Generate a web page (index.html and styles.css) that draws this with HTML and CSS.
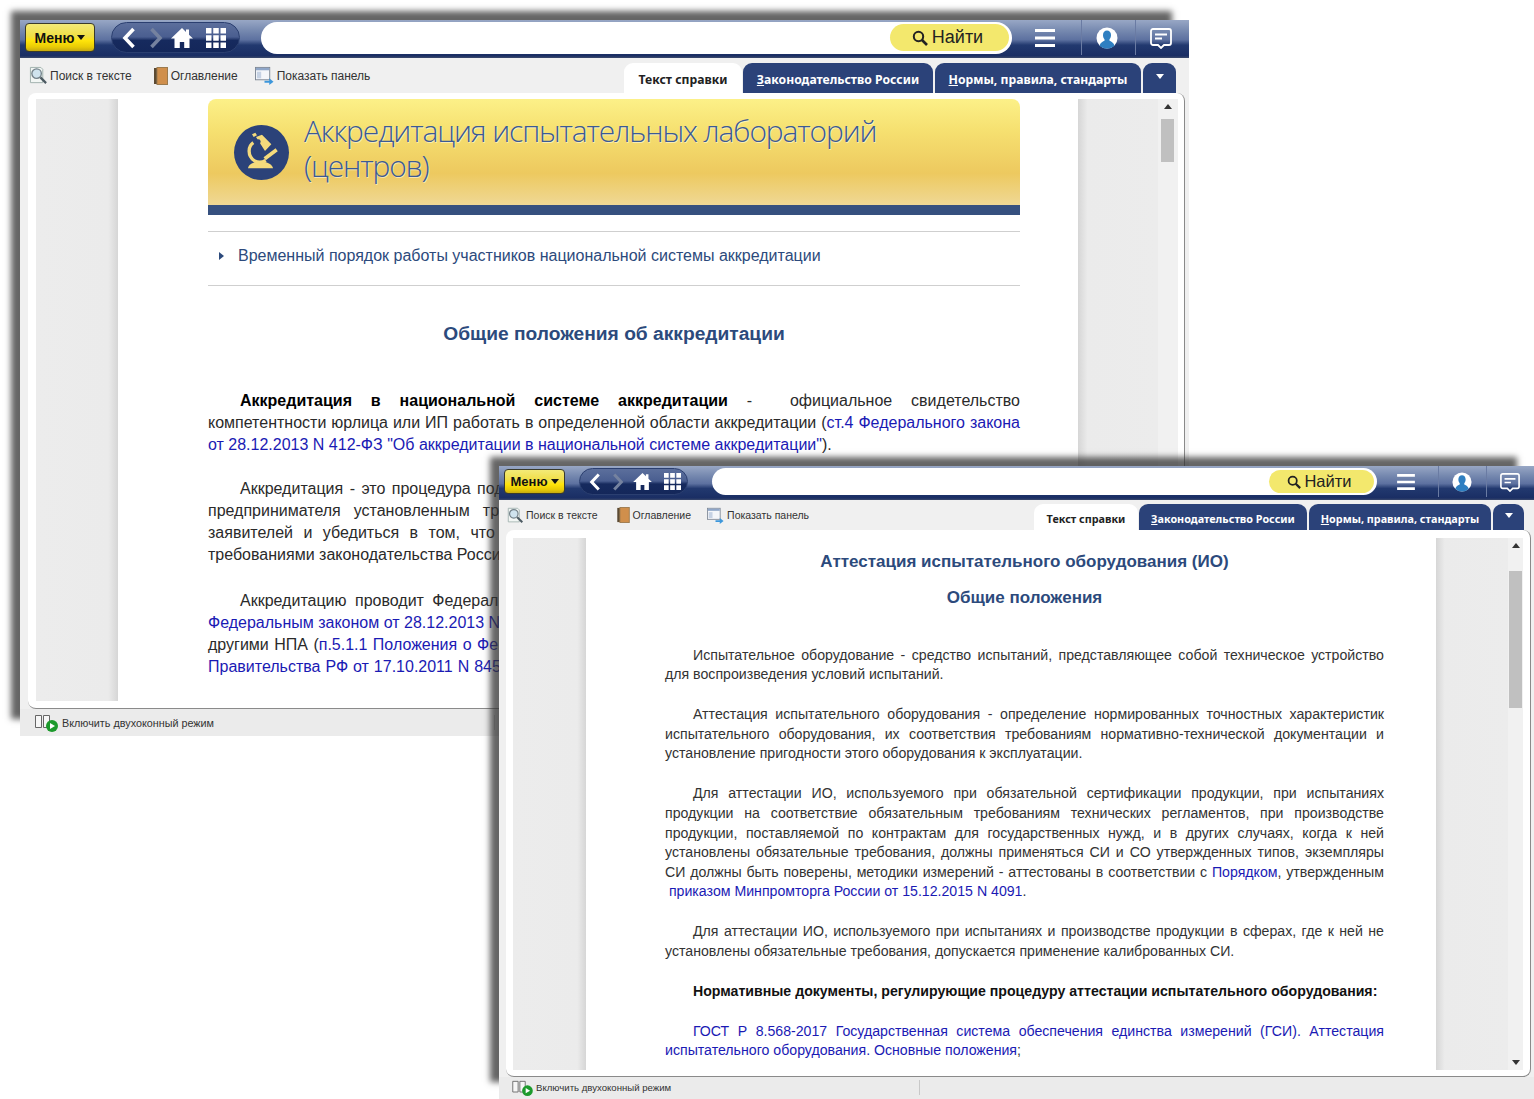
FILE: index.html
```html
<!DOCTYPE html>
<html lang="ru">
<head>
    <meta charset="UTF-8">
    <meta name="viewport" content="width=device-width, initial-scale=1.0">
    <title>Аккредитация испытательных лабораторий</title>
    <link rel="stylesheet" href="styles.css">
</head>
<body>

<!-- shared icons -->
<svg class="sprite" aria-hidden="true">
    <symbol id="i-back" viewBox="0 0 16 24"><path d="M12.500 3 4 12l8.500 9" fill="none" stroke="currentColor" stroke-width="3.600"/></symbol>
    <symbol id="i-forward" viewBox="0 0 16 24"><path d="M3.500 3 12 12l-8.500 9" fill="none" stroke="currentColor" stroke-width="3.600"/></symbol>
    <symbol id="i-home" viewBox="0 0 22 20"><path d="M11 0 0 10.500h3.500V20h5.300v-6h4.400v6h5.300v-9.500H22L18 6.700V1.500h-3v2.400z" fill="currentColor"/></symbol>
    <symbol id="i-grid" viewBox="0 0 20 20"><path d="M0 0h5.500v5.500H0zM7.250 0h5.500v5.500h-5.500zM14.500 0H20v5.500h-5.500zM0 7.250h5.500v5.500H0zM7.250 7.250h5.500v5.500h-5.500zM14.500 7.250H20v5.500h-5.500zM0 14.500h5.500V20H0zM7.250 14.500h5.500V20h-5.500zM14.500 14.500H20V20h-5.500z" fill="currentColor"/></symbol>
    <symbol id="i-glass" viewBox="0 0 16 16"><circle cx="6.500" cy="6.500" r="4.700" fill="none" stroke="currentColor" stroke-width="2"/><path d="m10 10 5 5" stroke="currentColor" stroke-width="2.600"/></symbol>
    <symbol id="i-burger" viewBox="0 0 20 18"><path d="M0 0h20v3H0zM0 7.500h20v3H0zM0 15h20v3H0z" fill="currentColor"/></symbol>
    <symbol id="i-user" viewBox="0 0 22 22"><circle cx="11" cy="11" r="10.500" fill="#fff"/><path d="M3.500 18.400c1-3 3.700-4 5-4.600v-1.500C7.300 11 7 9.500 7 8c0-2.800 1.800-4.500 4-4.500S15 5.200 15 8c0 1.500-.3 3-1.500 4.300v1.500c1.300.6 4 1.600 5 4.600a10.500 10.500 0 0 1-15 0z" fill="#2f7fc1"/></symbol>
    <symbol id="i-chat" viewBox="0 0 22 22"><path d="M3 2h16a2 2 0 0 1 2 2v12a2 2 0 0 1-2 2h-5l-3 3-3-3H3a2 2 0 0 1-2-2V4a2 2 0 0 1 2-2z" fill="none" stroke="currentColor" stroke-width="1.800"/><path d="M5 7.500h12M5 11.500h7" stroke="currentColor" stroke-width="1.800"/></symbol>
    <symbol id="i-search-doc" viewBox="0 0 20 20"><path d="M1.500 1.500h11l2 2v14h-13z" fill="#f2f6f4" stroke="#9fb0ad"/><circle cx="8" cy="8" r="5" fill="#cfe3ee" stroke="#74828a" stroke-width="1.400"/><path d="m12 12 6 6" stroke="#4c5a62" stroke-width="2.400"/></symbol>
    <symbol id="i-book" viewBox="0 0 14 18"><rect x="0" y="1" width="3" height="16" fill="#5b4a33"/><rect x="3" y="0.500" width="10.500" height="17" fill="#d08f4c" stroke="#9b7a4e"/></symbol>
    <symbol id="i-panel" viewBox="0 0 20 20"><rect x="0.500" y="1.500" width="15" height="13" fill="#f4f6fa" stroke="#7d8794"/><rect x="1" y="2" width="14" height="2.500" fill="#8fa6c8"/><rect x="2" y="6" width="4.500" height="7" fill="#c6d2e4"/><path d="M10 15.500h5v-2.500l4.500 3.500-4.500 3.500v-2.500h-5z" fill="#3d97db"/></symbol>
    <symbol id="i-dual" viewBox="0 0 24 18"><path d="M.5 1.500h6v12h-6zM8.500 1.500h6v12h-6z" fill="#f6f6f6" stroke="#666"/><circle cx="17" cy="12" r="6" fill="#1c9a2c"/><path d="m15 9 5 3-5 3z" fill="#fff"/></symbol>
    <symbol id="i-scope" viewBox="18 18 165 165">
        <path d="M60 148c2-12 14-18 30-20h15c17 2 28 9 30 20z" fill="#f4da7c"/>
        <path d="M76 71C60 82 57 110 80 126c10 5 24 4 33-2" fill="none" stroke="#f4da7c" stroke-width="10"/>
        <path d="m72 46 10-5 5 8-10 5zM84 54l18-7 28 29-19 20z" fill="#f4da7c"/>
        <circle cx="91" cy="68" r="7" fill="#2b4279"/>
        <path d="m110 119 36-27" stroke="#f4da7c" stroke-width="11"/>
    </symbol>
</svg>

<div class="win win-a">
    <div class="topbar">
        <button class="menu-btn">Меню<span class="caret"></span></button>
        <div class="nav-pill">
            <svg class="ic-back"><use href="#i-back"/></svg>
            <svg class="ic-forward"><use href="#i-forward"/></svg>
            <svg class="ic-home"><use href="#i-home"/></svg>
            <svg class="ic-grid"><use href="#i-grid"/></svg>
        </div>
        <div class="search">
            <div class="find"><svg class="ic-glass"><use href="#i-glass"/></svg>Найти</div>
        </div>
        <div class="top-cell cell-burger"><svg class="ic-burger"><use href="#i-burger"/></svg></div>
        <div class="top-cell cell-user"><svg class="ic-user"><use href="#i-user"/></svg></div>
        <div class="top-cell cell-chat"><svg class="ic-chat"><use href="#i-chat"/></svg></div>
    </div>

    <div class="toolbar">
        <div class="tools">
            <span class="tool tool-search"><svg class="ic-tool"><use href="#i-search-doc"/></svg>Поиск в тексте</span>
            <span class="tool tool-toc"><svg class="ic-tool-book"><use href="#i-book"/></svg>Оглавление</span>
            <span class="tool tool-panel"><svg class="ic-tool"><use href="#i-panel"/></svg>Показать панель</span>
        </div>
        <div class="tabs">
            <span class="tab tab-active">Текст справки</span>
            <span class="tab tab-law"><u>З</u>аконодательство России</span>
            <span class="tab tab-norm"><u>Н</u>ормы, правила, стандарты</span>
            <span class="tab tab-more"><span class="caret caret-white"></span></span>
        </div>
    </div>

    <div class="panel">
        <div class="side side-left"></div>
        <div class="doc">
            <div class="banner">
                <div class="banner-main">
                    <svg class="ic-scope"><use href="#i-scope"/></svg>
                    <div class="banner-title">Аккредитация испытательных лабораторий<br>(центров)</div>
                </div>
            </div>
            <div class="notice"><span class="notice-arrow"></span>Временный порядок работы участников национальной системы аккредитации</div>
            <h2 class="doc-heading">Общие положения об аккредитации</h2>
            <p class="para"><b>Аккредитация в национальной системе аккредитации</b> - &nbsp;официальное свидетельство компетентности юрлица или ИП работать в определенной области аккредитации (<a href="#">ст.4 Федерального закона от 28.12.2013 N 412-ФЗ "Об аккредитации в национальной системе аккредитации"</a>).</p>
            <!-- the right part of these two paragraphs sits under the second window -->
            <p class="para para-lines">
                <span class="line first ws-2">Аккредитация - это процедура под</span>
                <span class="line ws-8">предпринимателя установленным тр</span>
                <span class="line ws-6">заявителей и убедиться в том, что</span>
                <span class="line">требованиями законодательства Росси</span>
            </p>
            <p class="para para-lines">
                <span class="line first ws-4">Аккредитацию проводит Федерал</span>
                <span class="line"><a href="#">Федеральным законом от 28.12.2013 N</a></span>
                <span class="line ws-1">другими НПА (<a href="#">п.5.1.1 Положения о Фе</a></span>
                <span class="line ws-half"><a href="#">Правительства РФ от 17.10.2011 N 845</a></span>
            </p>
        </div>
        <div class="side side-right"></div>
        <div class="scroll">
            <span class="scroll-up"></span>
            <span class="scroll-thumb"></span>
        </div>
    </div>

    <div class="status">
        <span class="status-item"><svg class="ic-dual"><use href="#i-dual"/></svg>Включить двухоконный режим</span>
        <span class="status-sep"></span>
    </div>
</div>

<div class="win win-b">
    <div class="topbar">
        <button class="menu-btn">Меню<span class="caret"></span></button>
        <div class="nav-pill">
            <svg class="ic-back"><use href="#i-back"/></svg>
            <svg class="ic-forward"><use href="#i-forward"/></svg>
            <svg class="ic-home"><use href="#i-home"/></svg>
            <svg class="ic-grid"><use href="#i-grid"/></svg>
        </div>
        <div class="search">
            <div class="find"><svg class="ic-glass"><use href="#i-glass"/></svg>Найти</div>
        </div>
        <div class="top-cell cell-burger"><svg class="ic-burger"><use href="#i-burger"/></svg></div>
        <div class="top-cell cell-user"><svg class="ic-user"><use href="#i-user"/></svg></div>
        <div class="top-cell cell-chat"><svg class="ic-chat"><use href="#i-chat"/></svg></div>
    </div>

    <div class="toolbar">
        <div class="tools">
            <span class="tool tool-search"><svg class="ic-tool"><use href="#i-search-doc"/></svg>Поиск в тексте</span>
            <span class="tool tool-toc"><svg class="ic-tool-book"><use href="#i-book"/></svg>Оглавление</span>
            <span class="tool tool-panel"><svg class="ic-tool"><use href="#i-panel"/></svg>Показать панель</span>
        </div>
        <div class="tabs">
            <span class="tab tab-active">Текст справки</span>
            <span class="tab tab-law"><u>З</u>аконодательство России</span>
            <span class="tab tab-norm"><u>Н</u>ормы, правила, стандарты</span>
            <span class="tab tab-more"><span class="caret caret-white"></span></span>
        </div>
    </div>

    <div class="panel">
        <div class="side side-left"></div>
        <div class="doc">
            <h2 class="doc-title">Аттестация испытательного оборудования (ИО)</h2>
            <h2 class="doc-sub">Общие положения</h2>
            <p class="para">Испытательное оборудование - средство испытаний, представляющее собой техническое устройство для воспроизведения условий испытаний.</p>
            <p class="para">Аттестация испытательного оборудования - определение нормированных точностных характеристик испытательного оборудования, их соответствия требованиям нормативно-технической документации и установление пригодности этого оборудования к эксплуатации.</p>
            <p class="para">Для аттестации ИО, используемого при обязательной сертификации продукции, при испытаниях продукции на соответствие обязательным требованиям технических регламентов, при производстве продукции, поставляемой по контрактам для государственных нужд, и в других случаях, когда к ней установлены обязательные требования, должны применяться СИ и СО утвержденных типов, экземпляры СИ должны быть поверены, методики измерений - аттестованы в соответствии с <a href="#">Порядком</a>, утвержденным &nbsp;<a href="#">приказом Минпромторга России от 15.12.2015 N 4091</a>.</p>
            <p class="para">Для аттестации ИО, используемого при испытаниях и производстве продукции в сферах, где к ней не установлены обязательные требования, допускается применение калиброванных СИ.</p>
            <p class="para"><b>Нормативные документы, регулирующие процедуру аттестации испытательного оборудования:</b></p>
            <p class="para"><a href="#">ГОСТ Р 8.568-2017 Государственная система обеспечения единства измерений (ГСИ). Аттестация испытательного оборудования. Основные положения</a>;</p>
        </div>
        <div class="side side-right"></div>
        <div class="scroll">
            <span class="scroll-up"></span>
            <span class="scroll-thumb"></span>
            <span class="scroll-down"></span>
        </div>
    </div>

    <div class="status">
        <span class="status-item"><svg class="ic-dual"><use href="#i-dual"/></svg>Включить двухоконный режим</span>
        <span class="status-sep"></span>
    </div>
</div>

</body>
</html>
```

FILE: styles.css
```css
html, body {
    margin: 0;
    height: 100%;
}
body {
    position: relative;
    width: 1534px;
    height: 1099px;
    overflow: hidden;
    background: #fff;
    font-family: "Liberation Sans", Arial, sans-serif;
    color: #2a2a2a;
}
.sprite {
    display: none;
}
svg {
    display: block;
    flex: none;
}

/* windows on the desktop */
.win {
    position: absolute;
    display: flex;
    flex-direction: column;
    background: #f0f0f0;
    box-shadow: -13px -13px 6px -4px rgba(50, 50, 50, 0.75);
}
.win-a {
    left: 20px;
    top: 20px;
    width: 1169px;
    height: 716px;
}
.win-b {
    left: 499px;
    top: 466px;
    width: 1035px;
    height: 633px;
}

/* top blue bar */
.topbar {
    display: flex;
    align-items: center;
    flex: none;
    box-sizing: border-box;
    background: linear-gradient(#98a7c5 0%, #7487ae 30%, #5d71a0 52%, #22396f 66%, #1a2e64 94%, #3c4a6c 100%);
}
.win-a .topbar {
    height: 38px;
    padding: 0 0 3px 5px;
}
.win-b .topbar {
    height: 34px;
    padding: 0 0 3px 5px;
}
.menu-btn {
    display: flex;
    align-items: center;
    justify-content: center;
    gap: 3px;
    box-sizing: border-box;
    padding: 0;
    border: 1px solid #3a3a2a;
    border-radius: 4px;
    background: linear-gradient(#f3ea78 0%, #f0de45 45%, #ffe40a 62%, #e9cb05 85%, #c6aa10 100%);
    color: #111;
    font-family: "Liberation Sans", Arial, sans-serif;
    font-weight: bold;
}
.win-a .menu-btn {
    width: 70px;
    height: 29px;
    font-size: 14px;
}
.win-b .menu-btn {
    width: 61px;
    height: 25px;
    font-size: 13px;
}
.caret {
    width: 0;
    height: 0;
    border-left: 4.500px solid transparent;
    border-right: 4.500px solid transparent;
    border-top: 5px solid #111;
}
.caret-white {
    border-top-color: #fff;
}
.nav-pill {
    display: flex;
    align-items: center;
    box-sizing: border-box;
    border: 1px solid #2b3f70;
    border-radius: 17px;
    background: linear-gradient(#5c6f9c 0%, #4a5e90 48%, #162a5e 60%, #14275a 100%);
    color: #fff;
}
.win-a .nav-pill {
    width: 129px;
    height: 31px;
    margin-left: 16px;
    padding-left: 9px;
}
.win-b .nav-pill {
    width: 109px;
    height: 27px;
    margin-left: 14px;
    padding-left: 8px;
}
.ic-forward {
    color: #75829f;
}
.win-a .ic-back, .win-a .ic-forward {
    width: 16px;
    height: 24px;
}
.win-a .ic-forward {
    margin-left: 11px;
}
.win-a .ic-home {
    width: 22px;
    height: 20px;
    margin-left: 7px;
}
.win-a .ic-grid {
    width: 20px;
    height: 20px;
    margin-left: 13px;
}
.win-b .ic-back, .win-b .ic-forward {
    width: 14px;
    height: 20px;
}
.win-b .ic-forward {
    margin-left: 9px;
}
.win-b .ic-home {
    width: 19px;
    height: 17px;
    margin-left: 8px;
}
.win-b .ic-grid {
    width: 17px;
    height: 17px;
    margin-left: 12px;
}
.search {
    display: flex;
    justify-content: flex-end;
    align-items: center;
    box-sizing: border-box;
    background: #fff;
}
.win-a .search {
    width: 751px;
    height: 32px;
    margin-left: 21px;
    padding-right: 3px;
    border-radius: 16px;
}
.win-b .search {
    width: 665px;
    height: 27px;
    margin-left: 24px;
    padding-right: 3px;
    border-radius: 14px;
}
.find {
    display: flex;
    align-items: center;
    justify-content: center;
    box-sizing: border-box;
    padding-right: 4px;
    background: #f3e86d;
    color: #222;
}
.win-a .find {
    width: 119px;
    height: 27px;
    gap: 4px;
    border-radius: 14px;
    font-size: 18px;
}
.win-b .find {
    width: 105px;
    height: 23px;
    gap: 3px;
    border-radius: 12px;
    font-size: 16.500px;
}
.win-a .ic-glass {
    width: 16px;
    height: 16px;
}
.win-b .ic-glass {
    width: 14px;
    height: 14px;
}
.top-cell {
    display: flex;
    align-items: center;
    justify-content: center;
    align-self: stretch;
    color: #fff;
    box-sizing: border-box;
}
.cell-user, .cell-chat {
    border-left: 1px solid #6a7ba3;
}
.win-a .cell-burger {
    width: 69px;
    padding-right: 4px;
}
.win-a .cell-user, .win-a .cell-chat {
    width: 54px;
    padding-right: 3px;
}
.win-b .cell-burger {
    width: 61px;
    padding-right: 4px;
}
.win-b .cell-user, .win-b .cell-chat {
    width: 48px;
    padding-right: 2px;
}
.win-a .ic-burger {
    width: 20px;
    height: 18px;
}
.win-a .ic-user, .win-a .ic-chat {
    width: 22px;
    height: 22px;
}
.win-b .ic-burger {
    width: 18px;
    height: 16px;
}
.win-b .ic-user, .win-b .ic-chat {
    width: 20px;
    height: 20px;
}

/* tools and tabs row */
.toolbar {
    display: flex;
    justify-content: space-between;
    align-items: flex-end;
    flex: none;
    color: #333;
}
.win-a .toolbar {
    height: 35px;
    padding-right: 13px;
}
.win-b .toolbar {
    height: 30px;
    padding-right: 10px;
}
.tools {
    display: flex;
    align-items: center;
    align-self: stretch;
}
.tool {
    display: flex;
    align-items: center;
}
.win-a .tools {
    padding: 0 0 0 9px;
    font-size: 12px;
}
.win-b .tools {
    padding: 0 0 0 8px;
    font-size: 10.500px;
}
.win-a .tool {
    gap: 2px;
    margin-right: 22px;
}
.win-a .tool-toc {
    margin-right: 17px;
    gap: 3px;
}
.win-a .tool-panel {
    gap: 3px;
}
.win-b .tool {
    gap: 2px;
    margin-right: 19px;
}
.win-b .tool-toc {
    margin-right: 16px;
    gap: 3px;
}
.win-b .tool-panel {
    gap: 3px;
}
.ic-tool {
    width: 19px;
    height: 19px;
}
.ic-tool-book {
    width: 14px;
    height: 18px;
}
.win-b .ic-tool {
    width: 17px;
    height: 17px;
}
.win-b .ic-tool-book {
    width: 13px;
    height: 16px;
}
.tabs {
    display: flex;
    gap: 1px;
    font-family: "Noto Sans", sans-serif;
    font-weight: bold;
}
.tab {
    display: flex;
    align-items: center;
    justify-content: center;
    box-sizing: border-box;
    border-radius: 9px 9px 0 0;
    background: #2b4279;
    color: #fff;
}
.tab-active {
    background: #fff;
    color: #222;
}
.win-a .tab {
    height: 30px;
    padding-top: 2px;
    font-size: 12.200px;
}
.win-a .tab-active {
    width: 118px;
}
.win-a .tab-law {
    width: 190px;
}
.win-a .tab-norm {
    width: 206px;
    margin-left: 1px;
}
.win-a .tab-more {
    width: 33px;
    margin-left: 1px;
    padding-bottom: 6px;
}
.win-b .tab {
    height: 26px;
    padding-top: 2px;
    font-size: 10.800px;
}
.win-b .tab-active {
    width: 104px;
}
.win-b .tab-law {
    width: 168px;
}
.win-b .tab-norm {
    width: 182px;
    margin-left: 1px;
}
.win-b .tab-more {
    width: 31px;
    margin-left: 1px;
    padding-bottom: 6px;
}

/* white content panel */
.panel {
    display: grid;
    flex: 1;
    min-height: 0;
    box-sizing: border-box;
    background: #fff;
    border-right: 1px solid #8a8a8a;
    border-bottom: 1px solid #8a8a8a;
    border-radius: 8px;
}
.win-a .panel {
    grid-template-columns: 82px 960px 80px 20px;
    margin: 0 4px 0 8px;
    padding: 6px 0 7px 8px;
}
.win-b .panel {
    grid-template-columns: 73px 850px 72px 15px;
    margin: 0 3px 0 7px;
    padding: 8px 0 6px 7px;
}
.side-left {
    background: linear-gradient(to right, #ececec 0, #ebebeb 88%, #d6d6d6 100%);
}
.side-right {
    background: linear-gradient(to left, #ececec 0, #ebebeb 88%, #d6d6d6 100%);
}
.scroll {
    position: relative;
    background: #f1f1f1;
}
.scroll-up, .scroll-down {
    position: absolute;
    left: 50%;
    width: 0;
    height: 0;
    margin-left: -4px;
    border-left: 4px solid transparent;
    border-right: 4px solid transparent;
}
.scroll-up {
    top: 5px;
    border-bottom: 5px solid #333;
}
.scroll-down {
    bottom: 5px;
    border-top: 5px solid #333;
}
.scroll-thumb {
    position: absolute;
    background: #c0c0c0;
}
.win-a .scroll-thumb {
    left: 3px;
    right: 4px;
    top: 20px;
    height: 43px;
}
.win-b .scroll-thumb {
    left: 1px;
    right: 1px;
    top: 33px;
    height: 137px;
}

/* document body */
.doc {
    overflow: hidden;
    box-sizing: border-box;
}
.win-a .doc {
    padding: 0 58px 0 90px;
}
.win-b .doc {
    padding: 14px 52px 0 79px;
}
.doc a {
    color: #1a1ab4;
    text-decoration: none;
}
.para {
    margin: 0;
    text-align: justify;
}
.win-a .para {
    margin-bottom: 22px;
    font-size: 16px;
    line-height: 22px;
    text-indent: 32px;
}
.win-a .para-lines + .para-lines {
    margin-top: 24px;
}
.win-a .para b {
    color: #000;
}
.win-b .para {
    margin-bottom: 20.400px;
    font-size: 14.150px;
    line-height: 19.600px;
    text-indent: 28px;
    color: #333;
}
.win-b .para b {
    color: #111;
}
.line {
    display: block;
    white-space: nowrap;
    text-indent: 0;
}
.line.first {
    text-indent: 32px;
}
.ws-half {
    word-spacing: 0.500px;
}
.ws-1 {
    word-spacing: 1px;
}
.ws-2 {
    word-spacing: 2px;
}
.ws-4 {
    word-spacing: 4px;
}
.ws-6 {
    word-spacing: 6px;
}
.ws-8 {
    word-spacing: 8.500px;
}

/* yellow banner */
.banner {
    height: 116px;
    box-sizing: border-box;
    border-bottom: 10px solid #36507f;
    border-radius: 8px 8px 0 0;
    background: linear-gradient(#fcf088 0%, #f6e070 30%, #edc95f 70%, #efd895 100%);
}
.banner-main {
    display: flex;
    align-items: center;
    height: 100%;
    padding-left: 26px;
}
.ic-scope {
    width: 55px;
    height: 55px;
    margin-top: 1px;
    border-radius: 50%;
    background: #2b4279;
}
.banner-title {
    margin-left: 15px;
    margin-top: -9px;
    font-family: "Open Sans", sans-serif;
    font-weight: 300;
    font-size: 30px;
    line-height: 35px;
    letter-spacing: -1.150px;
    color: #3b5a94;
    text-shadow: 1px 1px 0 rgba(255, 255, 255, 0.5);
}
.notice {
    display: flex;
    align-items: center;
    box-sizing: border-box;
    height: 55px;
    margin-top: 16px;
    padding-bottom: 6px;
    border-top: 1px solid #cfcfcf;
    border-bottom: 1px solid #cfcfcf;
    font-size: 16px;
    color: #2c4a7c;
}
.notice-arrow {
    width: 0;
    height: 0;
    margin: 0 14px 0 11px;
    border-top: 4.500px solid transparent;
    border-bottom: 4.500px solid transparent;
    border-left: 5px solid #2c4a7c;
}
.doc-heading {
    margin: 36px 0 44px;
    text-align: center;
    font-size: 19.200px;
    line-height: 24px;
    color: #2c4a7c;
}
.doc-title, .doc-sub {
    margin: 0;
    text-align: center;
    font-size: 17px;
    line-height: 20px;
    color: #2c4a7c;
}
.doc-sub {
    margin: 16px 0 37.600px;
}

/* status line */
.status {
    display: flex;
    align-items: center;
    flex: none;
    background: #ebebeb;
    color: #333;
}
.win-a .status {
    height: 27px;
    padding-left: 15px;
    font-size: 10.800px;
}
.win-a .status-item {
    gap: 3px;
}
.win-b .status {
    box-sizing: border-box;
    height: 22px;
    padding: 0 0 1px 13px;
    font-size: 9.600px;
}
.status-item {
    display: flex;
    align-items: center;
    gap: 2px;
}
.ic-dual {
    width: 24px;
    height: 18px;
}
.win-b .ic-dual {
    width: 22px;
    height: 16px;
}
.status-sep {
    width: 1px;
    height: 15px;
    background: #c8c8c8;
}
.win-a .status-sep {
    margin-left: 280px;
}
.win-b .status-sep {
    margin-left: 248px;
}
```
